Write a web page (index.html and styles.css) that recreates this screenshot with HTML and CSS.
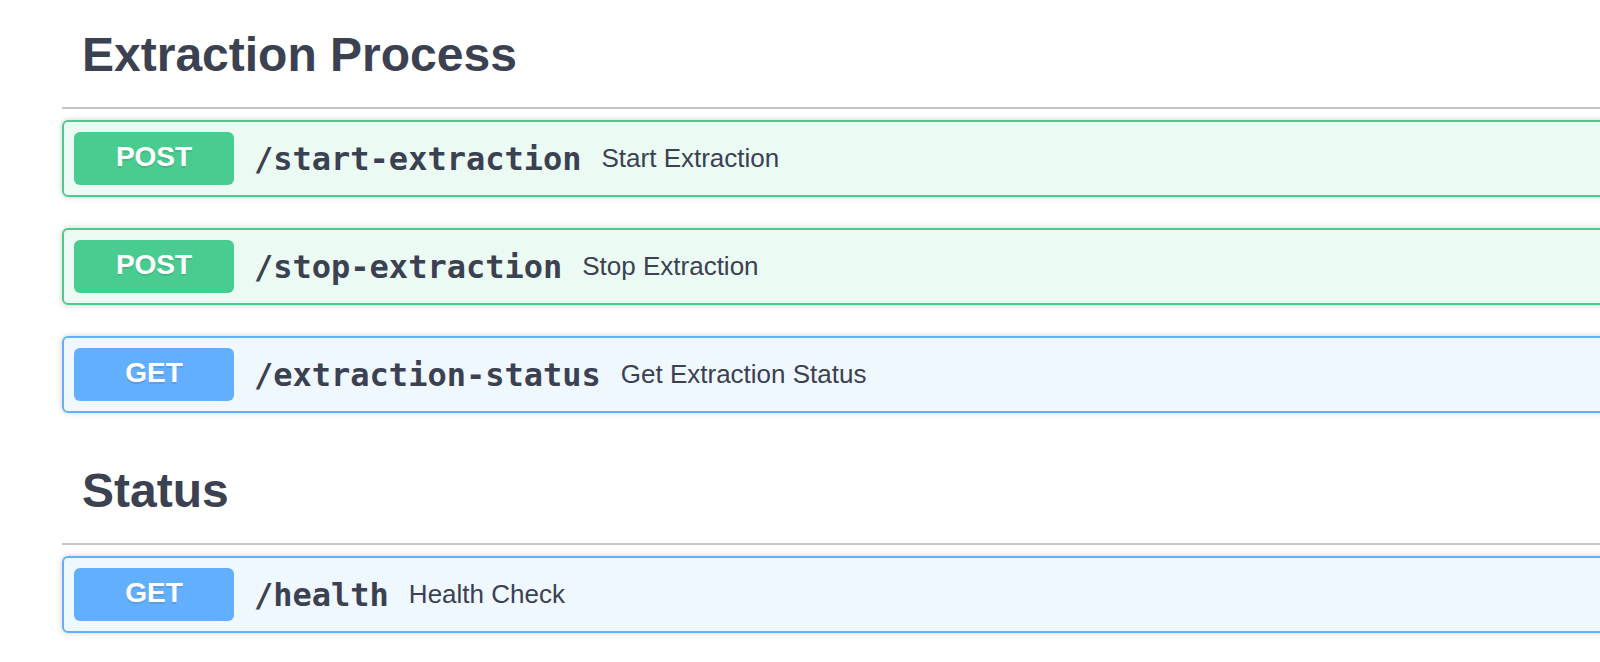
FILE: index.html
```html
<!DOCTYPE html>
<html lang="en">
<head>
<meta charset="utf-8">
<title>API</title>
<link rel="stylesheet" href="styles.css">
</head>
<body>
<div class="page">
  <section class="tag-section">
    <h3 class="tag">Extraction Process</h3>
    <div class="ops">
      <div class="op op-post">
        <span class="method">POST</span>
        <span class="path">/start-extraction</span>
        <span class="desc">Start Extraction</span>
      </div>
      <div class="op op-post">
        <span class="method">POST</span>
        <span class="path">/stop-extraction</span>
        <span class="desc">Stop Extraction</span>
      </div>
      <div class="op op-get">
        <span class="method">GET</span>
        <span class="path">/extraction-status</span>
        <span class="desc">Get Extraction Status</span>
      </div>
    </div>
  </section>
  <section class="tag-section">
    <h3 class="tag">Status</h3>
    <div class="ops">
      <div class="op op-get">
        <span class="method">GET</span>
        <span class="path">/health</span>
        <span class="desc">Health Check</span>
      </div>
    </div>
  </section>
</div>
</body>
</html>
```
FILE: styles.css
```css
html, body {
  margin: 0;
  padding: 0;
  background: #ffffff;
  overflow: hidden;
}

.page {
  box-sizing: border-box;
  width: 1660px;
  padding: 8px 0 0 62px;
}

.tag {
  margin: 0;
  padding: 19px 40px 24px 20px;
  font-family: "Liberation Sans", Arial, sans-serif;
  font-weight: 700;
  font-size: 48px;
  line-height: 56px;
  color: #3b4151;
  border-bottom: 2px solid rgba(59, 65, 81, 0.3);
}

.ops {
  padding-top: 11px;
}

.op {
  display: flex;
  align-items: center;
  padding: 10px;
  border: 2px solid;
  border-radius: 6px;
  box-shadow: 0 0 6px rgba(0, 0, 0, 0.19);
  margin-bottom: 31px;
}

.op-post {
  border-color: #49cc90;
  background: rgba(73, 204, 144, 0.1);
}

.op-get {
  border-color: #61affe;
  background: rgba(97, 175, 254, 0.1);
}

.method {
  box-sizing: border-box;
  min-width: 160px;
  height: 53px;
  padding-bottom: 3px;
  text-align: center;
  font-family: "Liberation Sans", Arial, sans-serif;
  font-weight: 700;
  font-size: 28px;
  line-height: 50px;
  color: #ffffff;
  border-radius: 6px;
  text-shadow: 0 2px 0 rgba(0, 0, 0, 0.1);
}

.op-post .method {
  background: #49cc90;
}

.op-get .method {
  background: #61affe;
}

.path {
  padding: 0 20px;
  font-family: "DejaVu Sans Mono", "Liberation Mono", monospace;
  font-weight: 700;
  font-size: 32px;
  color: #3b4151;
}

.desc {
  font-family: "Liberation Sans", Arial, sans-serif;
  font-size: 26px;
  color: #3b4151;
}
```
